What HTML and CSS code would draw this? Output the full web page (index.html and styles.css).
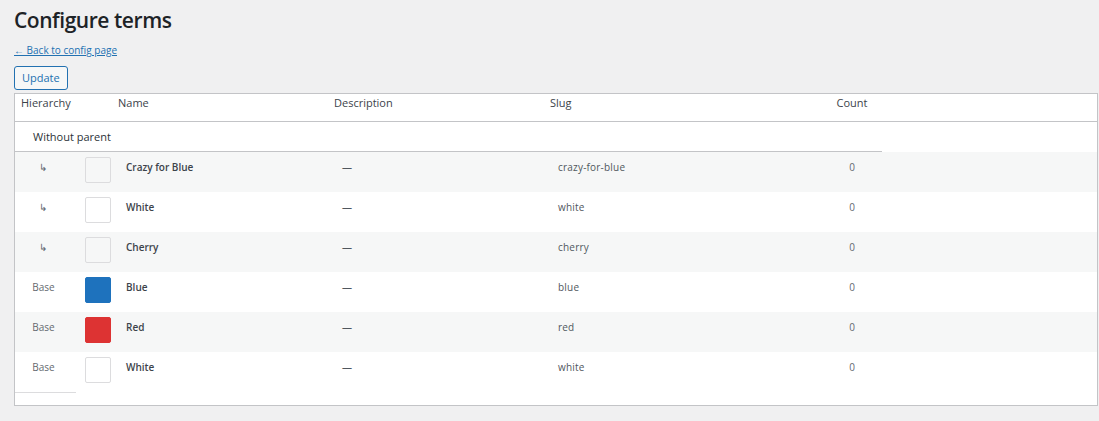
FILE: index.html
```html
<!DOCTYPE html>
<html lang="en">
<head>
<meta charset="utf-8">
<title>Configure terms</title>
<link rel="stylesheet" href="styles.css">
</head>
<body>
<div class="wrap">
  <h1 class="title">Configure terms</h1>
  <a class="back" href="#">← Back to config page</a>
  <div class="actions"><button class="btn">Update</button></div>
  <div class="table">
    <div class="head">
      <div class="h-hier">Hierarchy</div>
      <div class="h-name">Name</div>
      <div class="h-desc">Description</div>
      <div class="h-slug">Slug</div>
      <div class="h-count">Count</div>
    </div>
    <div class="group">Without parent</div>
    <div class="row alt">
      <div class="c-hier">↳</div>
      <div class="c-sw"><span class="sw"></span></div>
      <div class="c-name">Crazy for Blue</div>
      <div class="c-desc">—</div>
      <div class="c-slug">crazy-for-blue</div>
      <div class="c-count">0</div>
    </div>
    <div class="row">
      <div class="c-hier">↳</div>
      <div class="c-sw"><span class="sw sw-white"></span></div>
      <div class="c-name">White</div>
      <div class="c-desc">—</div>
      <div class="c-slug">white</div>
      <div class="c-count">0</div>
    </div>
    <div class="row alt">
      <div class="c-hier">↳</div>
      <div class="c-sw"><span class="sw"></span></div>
      <div class="c-name">Cherry</div>
      <div class="c-desc">—</div>
      <div class="c-slug">cherry</div>
      <div class="c-count">0</div>
    </div>
    <div class="row">
      <div class="c-hier base">Base</div>
      <div class="c-sw"><span class="sw sw-blue"></span></div>
      <div class="c-name">Blue</div>
      <div class="c-desc">—</div>
      <div class="c-slug">blue</div>
      <div class="c-count">0</div>
    </div>
    <div class="row alt">
      <div class="c-hier base">Base</div>
      <div class="c-sw"><span class="sw sw-red"></span></div>
      <div class="c-name">Red</div>
      <div class="c-desc">—</div>
      <div class="c-slug">red</div>
      <div class="c-count">0</div>
    </div>
    <div class="row">
      <div class="c-hier base">Base</div>
      <div class="c-sw"><span class="sw sw-white"></span></div>
      <div class="c-name">White</div>
      <div class="c-desc">—</div>
      <div class="c-slug">white</div>
      <div class="c-count">0</div>
    </div>
    <div class="foot"><span class="foot-line"></span></div>
  </div>
</div>
</body>
</html>
```
FILE: styles.css
```css
html, body {
  margin: 0;
  padding: 0;
  background: #f0f0f1;
}
body {
  font-family: "Open Sans", "Noto Sans", "Liberation Sans", sans-serif;
  color: #3c434a;
}
.wrap {
  padding: 0 1px 0 14px;
}
.title {
  margin: 0;
  padding-top: 6px;
  font-size: 21px;
  line-height: 28px;
  font-weight: 600;
  color: #1d2327;
  letter-spacing: -0.45px;
}
.back {
  display: block;
  width: fit-content;
  margin-top: 9px;
  font-size: 10px;
  line-height: 14px;
  color: #2271b1;
  text-decoration: underline;
}
.actions {
  margin-top: 9px;
  height: 27px;
  font-size: 0;
}
.btn {
  height: 24px;
  padding: 0 7px;
  border: 1px solid #2271b1;
  border-radius: 3px;
  background: #f6f7f7;
  color: #2271b1;
  font-family: inherit;
  font-size: 11px;
  line-height: 22px;
  margin: 0;
  vertical-align: top;
}
.table {
  background: #fff;
  border: 1px solid #c3c4c7;
  padding-bottom: 12px;
}
.head {
  display: grid;
  grid-template-columns: 103px 216px 216px 250px 104px 1fr;
  height: 27px;
  border-bottom: 1px solid #c3c4c7;
  font-size: 11px;
  line-height: 16px;
  color: #3c434a;
}
.head > div {
  padding-top: 1px;
}
.h-hier { padding-left: 6px; }
.h-count { text-align: center; }
.group {
  width: 867px;
  height: 30px;
  border-bottom: 1px solid #c3c4c7;
  padding-left: 18px;
  box-sizing: border-box;
  font-size: 11px;
  line-height: 29px;
  color: #2c3338;
}
.row {
  display: grid;
  grid-template-columns: 61px 42px 216px 216px 250px 104px 1fr;
  height: 40px;
  font-size: 10px;
  line-height: 16px;
  color: #50575e;
}
.row.alt { background: #f6f7f7; }
.row > div { padding-top: 7px; }
.c-hier { text-align: center; padding-right: 6px; color: #646970; }
.c-hier.base { padding-right: 4px; }
.c-sw { padding-top: 5px !important; padding-left: 9px; }
.sw {
  display: block;
  width: 24px;
  height: 24px;
  border: 1px solid #dcdcde;
  border-radius: 2px;
  background: #f6f7f7;
}
.sw-white { background: #fff; }
.sw-blue { background: #1e72bd; border-color: #1e72bd; }
.sw-red { background: #dd3333; border-color: #dd3333; }
.c-name { padding-left: 8px; font-weight: 600; color: #3c434a; }
.c-desc { padding-left: 8px; color: #50575e; }
.c-slug { padding-left: 8px; color: #50575e; letter-spacing: 0.2px; }
.c-count { text-align: center; color: #646970; }
.foot { height: 1px; }
.foot-line {
  display: block;
  width: 61px;
  height: 1px;
  background: #dcdcde;
}
```
